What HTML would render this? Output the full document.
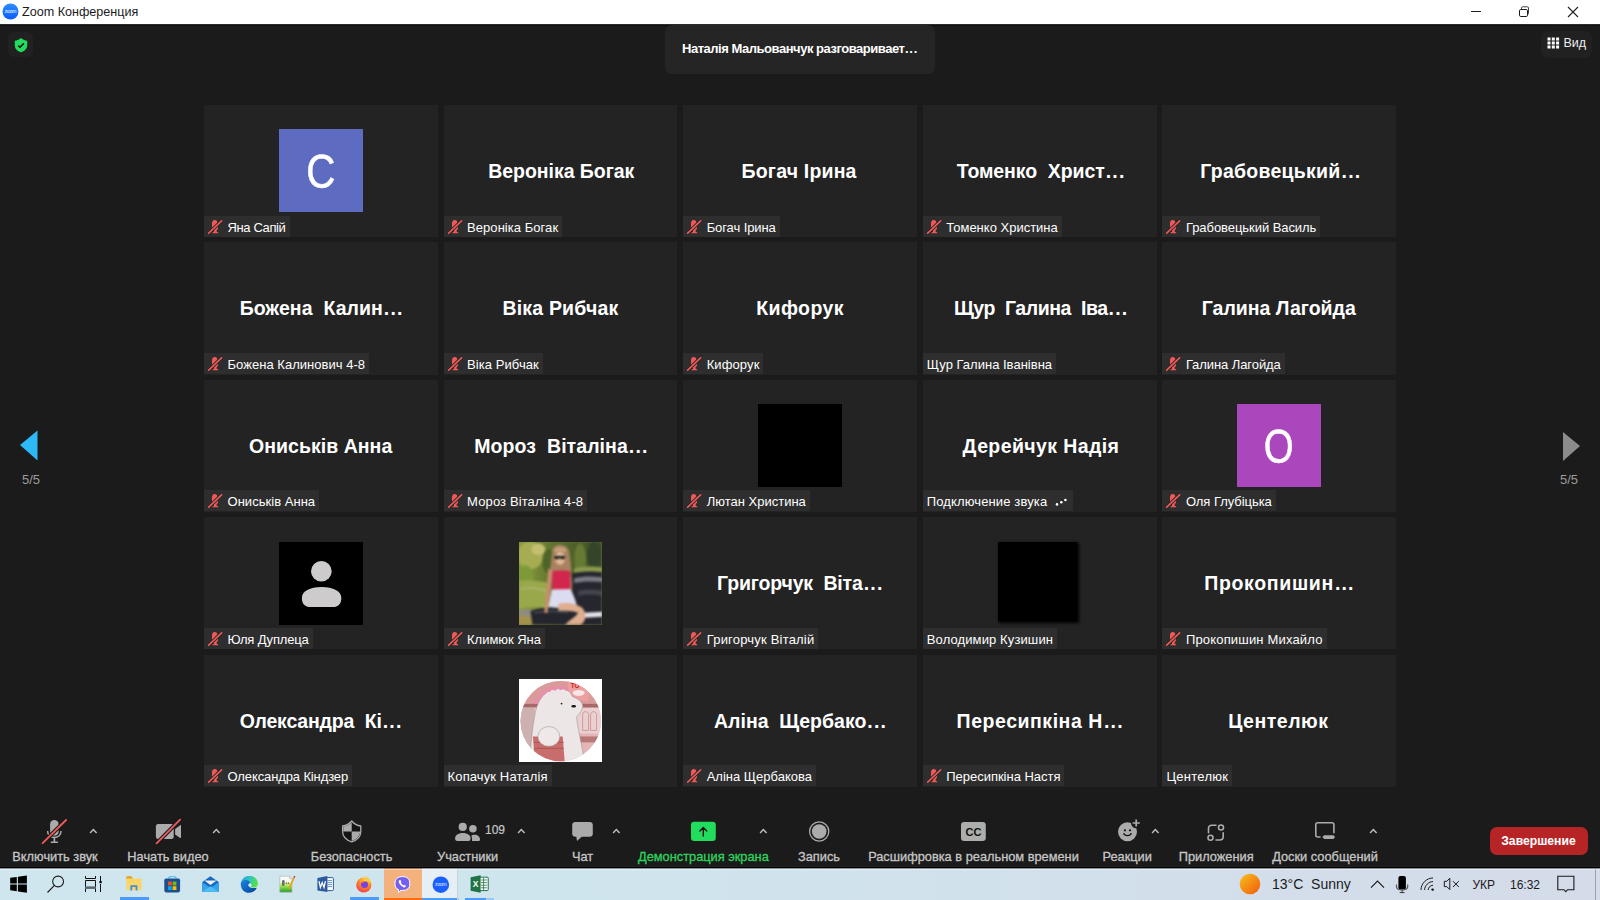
<!DOCTYPE html>
<html><head><meta charset="utf-8">
<style>
*{margin:0;padding:0;box-sizing:border-box}
html,body{width:1600px;height:900px;overflow:hidden;background:#1b1b1b;font-family:"Liberation Sans",sans-serif}
.abs{position:absolute}
#title{position:absolute;left:0;top:0;width:1600px;height:24px;background:#fff}
#title .t{position:absolute;left:22px;top:4.5px;font-size:12.6px;color:#1b1b1b;white-space:nowrap}
.tile{position:absolute;width:233.8px;height:132.2px;background:#232323;overflow:hidden}
.nm{position:absolute;left:0;right:0;top:1px;height:132px;display:flex;align-items:center;justify-content:center;color:#fff;font-weight:bold;font-size:19.5px;white-space:nowrap;padding-bottom:1px}
.av{position:absolute;left:75.1px;top:24.3px;width:83.5px;height:83.2px;overflow:hidden}
.av svg{display:block}
.av span{position:absolute;left:0;right:0;top:18.2px;text-align:center;color:#fff;font-size:48px;line-height:50px;-webkit-text-stroke:0.6px #fff}
.av.blur{background:#000;width:79px;height:79px;top:24.6px;box-shadow:1.5px 1.5px 3px 0.5px #000}
.lb{position:absolute;left:0;bottom:0.5px;height:21px;background:#2e2e2e;padding:0 4px 0 23.5px;color:#fff;font-size:13px;line-height:21px;white-space:nowrap}
.lt{position:relative;top:1px}
.lb.nomic{padding-left:4px}
.mic{position:absolute;left:0;top:0}
.dd{letter-spacing:1.2px;margin-left:1px}
#tb{position:absolute;left:0;top:800px;width:1600px;height:68px;background:#1b1b1b}
.tl{position:absolute;top:849px;color:#c6c6c6;font-size:12.8px;line-height:15px;white-space:nowrap;-webkit-text-stroke:0.3px currentColor}
.chev{position:absolute;top:828px;width:10px;height:7px}
#task{position:absolute;left:0;top:868px;width:1600px;height:32px;background:linear-gradient(to right,#d0e6ef 0%,#cfe5ee 36%,#d2e0eb 68%,#d4dbe9 97%)}
</style></head><body>
<div id="title">
 <svg class="abs" style="left:2px;top:3px" width="17" height="17" viewBox="0 0 17 17"><defs><linearGradient id="zg" x1="0" y1="0" x2="0" y2="1"><stop offset="0" stop-color="#2d8cff"/><stop offset="1" stop-color="#0b5cff"/></linearGradient></defs><circle cx="8.5" cy="8.5" r="8" fill="url(#zg)"/><text x="8.5" y="10.2" text-anchor="middle" font-size="5" letter-spacing="-0.2" fill="#fff" font-family="Liberation Sans">zoom</text></svg>
 <div class="t">Zoom Конференция</div>
 <div class="abs" style="left:1471px;top:11px;width:10px;height:1px;background:#222"></div>
 <svg class="abs" style="left:1518px;top:6px" width="12" height="12" viewBox="0 0 12 12"><rect x="1.5" y="3.5" width="8" height="7" rx="1.3" fill="none" stroke="#1a1a1a" stroke-width="1"/><path d="M3.5 3.2 V2 Q3.5 0.8 4.7 0.8 H9.3 Q10.5 0.8 10.5 2 V7.3 Q10.5 8.5 9.6 8.5" fill="none" stroke="#444" stroke-width="1"/></svg>
 <svg class="abs" style="left:1567px;top:6px" width="12" height="12" viewBox="0 0 12 12"><path d="M1 1 L11 11 M11 1 L1 11" stroke="#222" stroke-width="1.1"/></svg>
</div>
<div class="abs" style="left:0;top:24px;width:1600px;height:1px;background:#2c2c2c"></div><div class="abs" style="left:0;top:25px;width:1600px;height:1px;background:#111"></div>

<!-- security shield -->
<div class="abs" style="left:8px;top:32px;width:25px;height:25px;border-radius:6px;background:#212121"></div>
<svg class="abs" style="left:13px;top:37px" width="16" height="16" viewBox="0 0 16 16"><path d="M8 0.9 C6.6 2.4 4.2 3.4 1.8 3.7 V8.2 C1.8 11.6 4.4 14.2 8 15.3 C11.6 14.2 14.2 11.6 14.2 8.2 V3.7 C11.8 3.4 9.4 2.4 8 0.9 Z" fill="#22dc5e"/><path d="M5.2 8.6 L7 10.2 L10.8 6.4" fill="none" stroke="#111" stroke-width="1.5"/></svg>

<!-- speaker -->
<div class="abs" style="left:665px;top:25px;width:270px;height:49px;border-radius:7px;background:#252525"></div>
<div class="abs" style="left:682px;top:40.5px;color:#fff;font-weight:bold;font-size:13px;letter-spacing:-0.47px;white-space:nowrap">Наталія Мальованчук разговаривает<span style="letter-spacing:0.7px;margin-left:0.6px">...</span></div>

<!-- view -->
<div class="abs" style="left:1541px;top:31px;width:51px;height:27px;border-radius:7px;background:#212121"></div>
<svg class="abs" style="left:1547px;top:37px" width="13" height="12" viewBox="0 0 13 12"><g fill="#fff"><rect x="0.5" y="0.5" width="3" height="3"/><rect x="4.8" y="0.5" width="3" height="3"/><rect x="9.1" y="0.5" width="3" height="3"/><rect x="0.5" y="4.5" width="3" height="3"/><rect x="4.8" y="4.5" width="3" height="3"/><rect x="9.1" y="4.5" width="3" height="3"/><rect x="0.5" y="8.5" width="3" height="3"/><rect x="4.8" y="8.5" width="3" height="3"/><rect x="9.1" y="8.5" width="3" height="3"/></g></svg>
<div class="abs" style="left:1563.5px;top:35.5px;color:#eee;font-size:12.5px;white-space:nowrap">Вид</div>

<!-- arrows -->
<svg class="abs" style="left:18px;top:428px" width="22" height="35" viewBox="0 0 22 35"><path d="M2 17 L19.5 2.5 V32.5 Z" fill="#2eb8f6"/></svg>
<div class="abs" style="left:22px;top:471.8px;color:#9c9c9c;font-size:13px">5/5</div>
<svg class="abs" style="left:1560px;top:429px" width="22" height="35" viewBox="0 0 22 35"><path d="M3 3 L20 17 L3 32 Z" fill="#8b8b8b"/></svg>
<div class="abs" style="left:1560px;top:471.8px;color:#9c9c9c;font-size:13px">5/5</div>

<div class="tile" style="left:204px;top:104.9px"><div class="av" style="background:#5d6bc0"><span style="transform:scaleX(0.84)">C</span></div><div class="lb"><svg class="mic" width="24" height="21" viewBox="0 0 24 21"><path d="M10.7 4 C9 4 8 5.3 8 7.3 L8 11 C8 12.4 8.6 13.6 10 14.1 L10 16 L8.5 16.3 L8.5 17.3 L14.2 17.3 L14.2 16.3 L12.7 16 L12.7 14.1 C14 13.6 14 12.4 14 11 L13.5 7 C13.4 5.2 12.4 4 10.7 4 Z" fill="#ef5a59"/><path d="M4.7 17.2 L17.6 4.8" stroke="#262626" stroke-width="3.4"/><path d="M4.7 17.2 L17.6 4.8" stroke="#ef5a59" stroke-width="1.6" stroke-linecap="round"/></svg><span class="lt" style="letter-spacing:-0.375px">Яна Сапій</span></div></div>
<div class="tile" style="left:443.6px;top:104.9px"><div class="nm" style="letter-spacing:-0.035px;transform:translateX(0.75px)">Вероніка Богак</div><div class="lb"><svg class="mic" width="24" height="21" viewBox="0 0 24 21"><path d="M10.7 4 C9 4 8 5.3 8 7.3 L8 11 C8 12.4 8.6 13.6 10 14.1 L10 16 L8.5 16.3 L8.5 17.3 L14.2 17.3 L14.2 16.3 L12.7 16 L12.7 14.1 C14 13.6 14 12.4 14 11 L13.5 7 C13.4 5.2 12.4 4 10.7 4 Z" fill="#ef5a59"/><path d="M4.7 17.2 L17.6 4.8" stroke="#262626" stroke-width="3.4"/><path d="M4.7 17.2 L17.6 4.8" stroke="#ef5a59" stroke-width="1.6" stroke-linecap="round"/></svg><span class="lt" style="letter-spacing:0.046px">Вероніка Богак</span></div></div>
<div class="tile" style="left:683.2px;top:104.9px"><div class="nm" style="letter-spacing:0.183px;transform:translateX(-1.00px)">Богач Ірина</div><div class="lb"><svg class="mic" width="24" height="21" viewBox="0 0 24 21"><path d="M10.7 4 C9 4 8 5.3 8 7.3 L8 11 C8 12.4 8.6 13.6 10 14.1 L10 16 L8.5 16.3 L8.5 17.3 L14.2 17.3 L14.2 16.3 L12.7 16 L12.7 14.1 C14 13.6 14 12.4 14 11 L13.5 7 C13.4 5.2 12.4 4 10.7 4 Z" fill="#ef5a59"/><path d="M4.7 17.2 L17.6 4.8" stroke="#262626" stroke-width="3.4"/><path d="M4.7 17.2 L17.6 4.8" stroke="#ef5a59" stroke-width="1.6" stroke-linecap="round"/></svg><span class="lt" style="letter-spacing:-0.100px">Богач Ірина</span></div></div>
<div class="tile" style="left:922.8px;top:104.9px"><div class="nm" style="letter-spacing:-0.071px;transform:translateX(1.50px)">Томенко&nbsp; Христ<span class="dd">...</span></div><div class="lb"><svg class="mic" width="24" height="21" viewBox="0 0 24 21"><path d="M10.7 4 C9 4 8 5.3 8 7.3 L8 11 C8 12.4 8.6 13.6 10 14.1 L10 16 L8.5 16.3 L8.5 17.3 L14.2 17.3 L14.2 16.3 L12.7 16 L12.7 14.1 C14 13.6 14 12.4 14 11 L13.5 7 C13.4 5.2 12.4 4 10.7 4 Z" fill="#ef5a59"/><path d="M4.7 17.2 L17.6 4.8" stroke="#262626" stroke-width="3.4"/><path d="M4.7 17.2 L17.6 4.8" stroke="#ef5a59" stroke-width="1.6" stroke-linecap="round"/></svg><span class="lt">Томенко Христина</span></div></div>
<div class="tile" style="left:1162.4px;top:104.9px"><div class="nm" style="letter-spacing:0.249px;transform:translateX(1.50px)">Грабовецький<span class="dd">...</span></div><div class="lb"><svg class="mic" width="24" height="21" viewBox="0 0 24 21"><path d="M10.7 4 C9 4 8 5.3 8 7.3 L8 11 C8 12.4 8.6 13.6 10 14.1 L10 16 L8.5 16.3 L8.5 17.3 L14.2 17.3 L14.2 16.3 L12.7 16 L12.7 14.1 C14 13.6 14 12.4 14 11 L13.5 7 C13.4 5.2 12.4 4 10.7 4 Z" fill="#ef5a59"/><path d="M4.7 17.2 L17.6 4.8" stroke="#262626" stroke-width="3.4"/><path d="M4.7 17.2 L17.6 4.8" stroke="#ef5a59" stroke-width="1.6" stroke-linecap="round"/></svg><span class="lt" style="letter-spacing:-0.056px">Грабовецький Василь</span></div></div>
<div class="tile" style="left:204px;top:242.35px"><div class="nm" style="letter-spacing:0.038px;transform:translateX(0.75px)">Божена&nbsp; Калин<span class="dd">...</span></div><div class="lb"><svg class="mic" width="24" height="21" viewBox="0 0 24 21"><path d="M10.7 4 C9 4 8 5.3 8 7.3 L8 11 C8 12.4 8.6 13.6 10 14.1 L10 16 L8.5 16.3 L8.5 17.3 L14.2 17.3 L14.2 16.3 L12.7 16 L12.7 14.1 C14 13.6 14 12.4 14 11 L13.5 7 C13.4 5.2 12.4 4 10.7 4 Z" fill="#ef5a59"/><path d="M4.7 17.2 L17.6 4.8" stroke="#262626" stroke-width="3.4"/><path d="M4.7 17.2 L17.6 4.8" stroke="#ef5a59" stroke-width="1.6" stroke-linecap="round"/></svg><span class="lt" style="letter-spacing:0.031px">Божена Калинович 4-8</span></div></div>
<div class="tile" style="left:443.6px;top:242.35px"><div class="nm" style="letter-spacing:0.182px;transform:translateX(0.00px)">Віка Рибчак</div><div class="lb"><svg class="mic" width="24" height="21" viewBox="0 0 24 21"><path d="M10.7 4 C9 4 8 5.3 8 7.3 L8 11 C8 12.4 8.6 13.6 10 14.1 L10 16 L8.5 16.3 L8.5 17.3 L14.2 17.3 L14.2 16.3 L12.7 16 L12.7 14.1 C14 13.6 14 12.4 14 11 L13.5 7 C13.4 5.2 12.4 4 10.7 4 Z" fill="#ef5a59"/><path d="M4.7 17.2 L17.6 4.8" stroke="#262626" stroke-width="3.4"/><path d="M4.7 17.2 L17.6 4.8" stroke="#ef5a59" stroke-width="1.6" stroke-linecap="round"/></svg><span class="lt" style="letter-spacing:0.060px">Віка Рибчак</span></div></div>
<div class="tile" style="left:683.2px;top:242.35px"><div class="nm" style="letter-spacing:0.429px;transform:translateX(0.00px)">Кифорук</div><div class="lb"><svg class="mic" width="24" height="21" viewBox="0 0 24 21"><path d="M10.7 4 C9 4 8 5.3 8 7.3 L8 11 C8 12.4 8.6 13.6 10 14.1 L10 16 L8.5 16.3 L8.5 17.3 L14.2 17.3 L14.2 16.3 L12.7 16 L12.7 14.1 C14 13.6 14 12.4 14 11 L13.5 7 C13.4 5.2 12.4 4 10.7 4 Z" fill="#ef5a59"/><path d="M4.7 17.2 L17.6 4.8" stroke="#262626" stroke-width="3.4"/><path d="M4.7 17.2 L17.6 4.8" stroke="#ef5a59" stroke-width="1.6" stroke-linecap="round"/></svg><span class="lt" style="letter-spacing:0.100px">Кифорук</span></div></div>
<div class="tile" style="left:922.8px;top:242.35px"><div class="nm" style="letter-spacing:-0.436px;transform:translateX(1.50px)">Щур&nbsp; Галина&nbsp; Іва<span class="dd">...</span></div><div class="lb nomic"><span class="lt" style="letter-spacing:0.011px">Щур Галина Іванівна</span></div></div>
<div class="tile" style="left:1162.4px;top:242.35px"><div class="nm" style="letter-spacing:-0.001px;transform:translateX(-0.50px)">Галина Лагойда</div><div class="lb"><svg class="mic" width="24" height="21" viewBox="0 0 24 21"><path d="M10.7 4 C9 4 8 5.3 8 7.3 L8 11 C8 12.4 8.6 13.6 10 14.1 L10 16 L8.5 16.3 L8.5 17.3 L14.2 17.3 L14.2 16.3 L12.7 16 L12.7 14.1 C14 13.6 14 12.4 14 11 L13.5 7 C13.4 5.2 12.4 4 10.7 4 Z" fill="#ef5a59"/><path d="M4.7 17.2 L17.6 4.8" stroke="#262626" stroke-width="3.4"/><path d="M4.7 17.2 L17.6 4.8" stroke="#ef5a59" stroke-width="1.6" stroke-linecap="round"/></svg><span class="lt" style="letter-spacing:-0.077px">Галина Лагойда</span></div></div>
<div class="tile" style="left:204px;top:379.8px"><div class="nm" style="letter-spacing:0.039px;transform:translateX(-0.25px)">Ониськів Анна</div><div class="lb"><svg class="mic" width="24" height="21" viewBox="0 0 24 21"><path d="M10.7 4 C9 4 8 5.3 8 7.3 L8 11 C8 12.4 8.6 13.6 10 14.1 L10 16 L8.5 16.3 L8.5 17.3 L14.2 17.3 L14.2 16.3 L12.7 16 L12.7 14.1 C14 13.6 14 12.4 14 11 L13.5 7 C13.4 5.2 12.4 4 10.7 4 Z" fill="#ef5a59"/><path d="M4.7 17.2 L17.6 4.8" stroke="#262626" stroke-width="3.4"/><path d="M4.7 17.2 L17.6 4.8" stroke="#ef5a59" stroke-width="1.6" stroke-linecap="round"/></svg><span class="lt" style="letter-spacing:0.033px">Ониськів Анна</span></div></div>
<div class="tile" style="left:443.6px;top:379.8px"><div class="nm" style="letter-spacing:0.066px;transform:translateX(1.00px)">Мороз&nbsp; Віталіна<span class="dd">...</span></div><div class="lb"><svg class="mic" width="24" height="21" viewBox="0 0 24 21"><path d="M10.7 4 C9 4 8 5.3 8 7.3 L8 11 C8 12.4 8.6 13.6 10 14.1 L10 16 L8.5 16.3 L8.5 17.3 L14.2 17.3 L14.2 16.3 L12.7 16 L12.7 14.1 C14 13.6 14 12.4 14 11 L13.5 7 C13.4 5.2 12.4 4 10.7 4 Z" fill="#ef5a59"/><path d="M4.7 17.2 L17.6 4.8" stroke="#262626" stroke-width="3.4"/><path d="M4.7 17.2 L17.6 4.8" stroke="#ef5a59" stroke-width="1.6" stroke-linecap="round"/></svg><span class="lt" style="letter-spacing:0.118px">Мороз Віталіна 4-8</span></div></div>
<div class="tile" style="left:683.2px;top:379.8px"><div class="av" style="background:#000"></div><div class="lb"><svg class="mic" width="24" height="21" viewBox="0 0 24 21"><path d="M10.7 4 C9 4 8 5.3 8 7.3 L8 11 C8 12.4 8.6 13.6 10 14.1 L10 16 L8.5 16.3 L8.5 17.3 L14.2 17.3 L14.2 16.3 L12.7 16 L12.7 14.1 C14 13.6 14 12.4 14 11 L13.5 7 C13.4 5.2 12.4 4 10.7 4 Z" fill="#ef5a59"/><path d="M4.7 17.2 L17.6 4.8" stroke="#262626" stroke-width="3.4"/><path d="M4.7 17.2 L17.6 4.8" stroke="#ef5a59" stroke-width="1.6" stroke-linecap="round"/></svg><span class="lt">Лютан Христина</span></div></div>
<div class="tile" style="left:922.8px;top:379.8px"><div class="nm" style="letter-spacing:0.393px;transform:translateX(1.25px)">Дерейчук Надія</div><div class="lb nomic"><span class="lt" style="letter-spacing:0.125px">Подключение звука</span><svg style="position:relative;top:3px;margin-left:5px" width="17" height="12" viewBox="0 0 17 12"><circle cx="5" cy="8.4" r="1.3" fill="#fff"/><circle cx="9.3" cy="6.2" r="1.3" fill="#fff"/><circle cx="13.4" cy="4" r="1.3" fill="#fff"/></svg></div></div>
<div class="tile" style="left:1162.4px;top:379.8px"><div class="av" style="background:#ab47bc"><span style="transform:scaleX(0.8)">O</span></div><div class="lb"><svg class="mic" width="24" height="21" viewBox="0 0 24 21"><path d="M10.7 4 C9 4 8 5.3 8 7.3 L8 11 C8 12.4 8.6 13.6 10 14.1 L10 16 L8.5 16.3 L8.5 17.3 L14.2 17.3 L14.2 16.3 L12.7 16 L12.7 14.1 C14 13.6 14 12.4 14 11 L13.5 7 C13.4 5.2 12.4 4 10.7 4 Z" fill="#ef5a59"/><path d="M4.7 17.2 L17.6 4.8" stroke="#262626" stroke-width="3.4"/><path d="M4.7 17.2 L17.6 4.8" stroke="#ef5a59" stroke-width="1.6" stroke-linecap="round"/></svg><span class="lt" style="letter-spacing:-0.050px">Оля Глубіцька</span></div></div>
<div class="tile" style="left:204px;top:517.25px"><div class="av" style="background:#000"><svg width="100%" height="100%" viewBox="0 0 84 84" preserveAspectRatio="none"><circle cx="42.6" cy="29.6" r="10.4" fill="#cdcbcc"/><path d="M23 56.5 C23 49.5 31 45.4 42.8 45.4 C54.6 45.4 62.7 49.5 62.7 56.5 C62.7 62.5 59.5 65.7 54 65.7 H31.7 C26.2 65.7 23 62.5 23 56.5 Z" fill="#cdcbcc"/></svg></div><div class="lb"><svg class="mic" width="24" height="21" viewBox="0 0 24 21"><path d="M10.7 4 C9 4 8 5.3 8 7.3 L8 11 C8 12.4 8.6 13.6 10 14.1 L10 16 L8.5 16.3 L8.5 17.3 L14.2 17.3 L14.2 16.3 L12.7 16 L12.7 14.1 C14 13.6 14 12.4 14 11 L13.5 7 C13.4 5.2 12.4 4 10.7 4 Z" fill="#ef5a59"/><path d="M4.7 17.2 L17.6 4.8" stroke="#262626" stroke-width="3.4"/><path d="M4.7 17.2 L17.6 4.8" stroke="#ef5a59" stroke-width="1.6" stroke-linecap="round"/></svg><span class="lt" style="letter-spacing:-0.160px">Юля Дуплеца</span></div></div>
<div class="tile" style="left:443.6px;top:517.25px"><div class="av" style="background:#6f7a3a"><svg style="position:absolute;left:-1.5px;top:-1.5px;width:86.5px;height:86.2px;filter:blur(0.8px)" viewBox="-1.5 -1.5 87 87" preserveAspectRatio="none">
<defs><filter id="pb" x="-10%" y="-10%" width="120%" height="120%"><feGaussianBlur stdDeviation="0.75"/></filter>
<linearGradient id="pg" x1="0" y1="0" x2="1" y2="0"><stop offset="0" stop-color="#8fa040"/><stop offset="0.45" stop-color="#5a6e2c"/><stop offset="1" stop-color="#3c4c26"/></linearGradient></defs>
<g>
<rect width="84" height="84" fill="url(#pg)"/>
<ellipse cx="12" cy="14" rx="13" ry="14" fill="#a6ac52"/>
<ellipse cx="20" cy="8" rx="7" ry="6" fill="#c2c070"/>
<ellipse cx="6" cy="34" rx="9" ry="10" fill="#7e9a38"/>
<ellipse cx="30" cy="20" rx="6" ry="12" fill="#4e6428"/>
<ellipse cx="62" cy="18" rx="6" ry="16" fill="#667a34"/>
<ellipse cx="76" cy="14" rx="7" ry="14" fill="#33442a"/>
<path d="M56 27 C64 25 76 25 84 26 V33 C76 32 64 32 56 33 Z" fill="#8a9a4c"/>
<path d="M0 40 C10 38 22 40 30 42 V68 C20 66 8 66 0 68 Z" fill="#9aa84c"/>
<path d="M2 48 C10 46 20 47 28 50" stroke="#b4b878" stroke-width="1.5" fill="none"/>
<path d="M0 70 C8 68 18 68 28 70 V84 H0 Z" fill="#a4924c"/>
<ellipse cx="8" cy="72" rx="8" ry="3.5" fill="#8c8c86"/>
<path d="M54 32 C64 30 76 30 84 31 V84 H54 Z" fill="#26262e"/>
<path d="M56 37 C64 35 74 35 84 36 V41 C74 40 64 40 56 42 Z" fill="#7a7a86"/>
<path d="M60 50 C68 48 76 48 84 50 V55 C76 53 68 53 60 55 Z" fill="#44444c"/>
<path d="M12 70 C24 66 40 66 56 68 L84 70 V84 H14 Z" fill="#25252d"/>
<path d="M16 72 C26 70 40 70 50 72" stroke="#55555e" stroke-width="1.2" fill="none"/>
<path d="M66 72 L84 71 V76 L66 77 Z" fill="#e2e2ea"/>
<path d="M34 9 C35 4 40 2.5 44 3.5 C49 4.5 51 8 51.5 13 L53 27 C54 31 52 33 49 33 L36 33 C33 33 31 31 32 27 Z" fill="#a88260"/>
<ellipse cx="41.8" cy="17" rx="5" ry="6.6" fill="#e2b898"/>
<path d="M36 8 C39 5 45 5 48 8 L47 11 C44 9 40 9 37 11 Z" fill="#c8a47c"/>
<path d="M36 14.6 H46.8 V17 C45 18.4 43 18.2 41.6 16.4 C40 18.2 37.6 18.4 36 17 Z" fill="#1c1c1c"/>
<path d="M30 27 C29 40 27 58 26 72 L29 72.5 C31 60 33 44 34.5 30 Z" fill="#c68e6c"/>
<path d="M51 28 C53 34 54 42 53.5 48 L50.5 48 Z" fill="#c68e6c"/>
<path d="M34 30 C38 29 47 29 52 30 L52.5 49 L33.8 49.5 Z" fill="#d2264c"/>
<path d="M33.5 48.5 L52.5 48 C55 54 57.5 59 58.5 64 C50 67 40 68 30 66 Z" fill="#dcdcf0"/>
<path d="M40 63 C48 61 58 62 64 67 C67 70 68 74 67 78 C66 81 64 84 62 84 L47 84 C50 80 58 76 60 72 C54 70 46 70 40 70 Z" fill="#deae8e"/>
</g></svg></div><div class="lb"><svg class="mic" width="24" height="21" viewBox="0 0 24 21"><path d="M10.7 4 C9 4 8 5.3 8 7.3 L8 11 C8 12.4 8.6 13.6 10 14.1 L10 16 L8.5 16.3 L8.5 17.3 L14.2 17.3 L14.2 16.3 L12.7 16 L12.7 14.1 C14 13.6 14 12.4 14 11 L13.5 7 C13.4 5.2 12.4 4 10.7 4 Z" fill="#ef5a59"/><path d="M4.7 17.2 L17.6 4.8" stroke="#262626" stroke-width="3.4"/><path d="M4.7 17.2 L17.6 4.8" stroke="#ef5a59" stroke-width="1.6" stroke-linecap="round"/></svg><span class="lt" style="letter-spacing:-0.044px">Климюк Яна</span></div></div>
<div class="tile" style="left:683.2px;top:517.25px"><div class="nm" style="letter-spacing:-0.167px;transform:translateX(0.25px)">Григорчук&nbsp; Віта<span class="dd">...</span></div><div class="lb"><svg class="mic" width="24" height="21" viewBox="0 0 24 21"><path d="M10.7 4 C9 4 8 5.3 8 7.3 L8 11 C8 12.4 8.6 13.6 10 14.1 L10 16 L8.5 16.3 L8.5 17.3 L14.2 17.3 L14.2 16.3 L12.7 16 L12.7 14.1 C14 13.6 14 12.4 14 11 L13.5 7 C13.4 5.2 12.4 4 10.7 4 Z" fill="#ef5a59"/><path d="M4.7 17.2 L17.6 4.8" stroke="#262626" stroke-width="3.4"/><path d="M4.7 17.2 L17.6 4.8" stroke="#ef5a59" stroke-width="1.6" stroke-linecap="round"/></svg><span class="lt" style="letter-spacing:0.200px">Григорчук Віталій</span></div></div>
<div class="tile" style="left:922.8px;top:517.25px"><div class="av blur"></div><div class="lb nomic"><span class="lt" style="letter-spacing:0.113px">Володимир Кузишин</span></div></div>
<div class="tile" style="left:1162.4px;top:517.25px"><div class="nm" style="letter-spacing:0.650px;transform:translateX(0.25px)">Прокопишин<span class="dd">...</span></div><div class="lb"><svg class="mic" width="24" height="21" viewBox="0 0 24 21"><path d="M10.7 4 C9 4 8 5.3 8 7.3 L8 11 C8 12.4 8.6 13.6 10 14.1 L10 16 L8.5 16.3 L8.5 17.3 L14.2 17.3 L14.2 16.3 L12.7 16 L12.7 14.1 C14 13.6 14 12.4 14 11 L13.5 7 C13.4 5.2 12.4 4 10.7 4 Z" fill="#ef5a59"/><path d="M4.7 17.2 L17.6 4.8" stroke="#262626" stroke-width="3.4"/><path d="M4.7 17.2 L17.6 4.8" stroke="#ef5a59" stroke-width="1.6" stroke-linecap="round"/></svg><span class="lt" style="letter-spacing:0.176px">Прокопишин Михайло</span></div></div>
<div class="tile" style="left:204px;top:654.7px"><div class="nm" style="letter-spacing:-0.177px;transform:translateX(0.25px)">Олександра&nbsp; Кі<span class="dd">...</span></div><div class="lb"><svg class="mic" width="24" height="21" viewBox="0 0 24 21"><path d="M10.7 4 C9 4 8 5.3 8 7.3 L8 11 C8 12.4 8.6 13.6 10 14.1 L10 16 L8.5 16.3 L8.5 17.3 L14.2 17.3 L14.2 16.3 L12.7 16 L12.7 14.1 C14 13.6 14 12.4 14 11 L13.5 7 C13.4 5.2 12.4 4 10.7 4 Z" fill="#ef5a59"/><path d="M4.7 17.2 L17.6 4.8" stroke="#262626" stroke-width="3.4"/><path d="M4.7 17.2 L17.6 4.8" stroke="#ef5a59" stroke-width="1.6" stroke-linecap="round"/></svg><span class="lt" style="letter-spacing:-0.118px">Олександра Кіндзер</span></div></div>
<div class="tile" style="left:443.6px;top:654.7px"><div class="av" style="background:#fff"><svg style="position:absolute;left:0;top:0;width:100%;height:100%" viewBox="0 0 84 84" preserveAspectRatio="none">
<defs><clipPath id="bc"><circle cx="42" cy="42.5" r="40.5"/></clipPath><filter id="bb"><feGaussianBlur stdDeviation="0.5"/></filter></defs>
<g clip-path="url(#bc)"><g>
<rect width="84" height="84" fill="#e4b6b6"/>
<rect x="0" y="0" width="84" height="25" fill="#d99a9a"/>
<rect x="0" y="25" width="84" height="4" fill="#a86868"/>
<rect x="0" y="29" width="84" height="26" fill="#ead0d0"/>
<rect x="0" y="29" width="16" height="55" fill="#cdb0b0"/>
<rect x="49" y="1" width="21" height="21" fill="#eea0a0"/>
<ellipse cx="60" cy="14" rx="6" ry="3" fill="#f6e6e6"/>
<path d="M64 36 C64 32 70 32 70 36 V52 H64 Z M72 36 C72 32 78 32 78 36 V52 H72 Z" fill="none" stroke="#c99090" stroke-width="0.8"/>
<rect x="60" y="58" width="24" height="6" fill="#b77878"/>
<path d="M11 84 C12 66 14 40 18 28 C22 16 30 9.5 40 9.5 C48 9.5 52 13 54 18 C60 20 65 24 64 28.5 C63 33 60 36 58 38 C58 44 62 60 66 84 Z" fill="#ece6e6" stroke="#9a8a8a" stroke-width="0.5"/>
<path d="M14 58 L44 58 L46 84 L16 84 Z" fill="#c86c6c"/>
<path d="M15 64 H45 M15 70 H45" stroke="#a85050" stroke-width="0.8"/>
<ellipse cx="30" cy="58" rx="11" ry="10" fill="#eee8e8" stroke="#9a8a8a" stroke-width="0.5"/>
<circle cx="42.8" cy="24.8" r="0.9" fill="#222"/>
<ellipse cx="55" cy="27.5" rx="2.4" ry="1.3" fill="#111"/>
<g fill="#f08ab0"><circle cx="17" cy="23" r="2.2"/><circle cx="21" cy="18" r="2.2"/><circle cx="25" cy="14" r="2.2"/><circle cx="30" cy="11" r="2.2"/><circle cx="36" cy="9.5" r="2.2"/><circle cx="42" cy="9" r="2.2"/><circle cx="48" cy="10" r="2"/></g>
<text x="52" y="9" font-family="Liberation Sans" font-weight="bold" font-size="6.5" fill="#c41c1c">TO</text>
</g></g></svg></div><div class="lb nomic"><span class="lt" style="letter-spacing:0.115px">Копачук Наталія</span></div></div>
<div class="tile" style="left:683.2px;top:654.7px"><div class="nm" style="letter-spacing:0.001px;transform:translateX(0.50px)">Аліна&nbsp; Щербако<span class="dd">...</span></div><div class="lb"><svg class="mic" width="24" height="21" viewBox="0 0 24 21"><path d="M10.7 4 C9 4 8 5.3 8 7.3 L8 11 C8 12.4 8.6 13.6 10 14.1 L10 16 L8.5 16.3 L8.5 17.3 L14.2 17.3 L14.2 16.3 L12.7 16 L12.7 14.1 C14 13.6 14 12.4 14 11 L13.5 7 C13.4 5.2 12.4 4 10.7 4 Z" fill="#ef5a59"/><path d="M4.7 17.2 L17.6 4.8" stroke="#262626" stroke-width="3.4"/><path d="M4.7 17.2 L17.6 4.8" stroke="#ef5a59" stroke-width="1.6" stroke-linecap="round"/></svg><span class="lt">Аліна Щербакова</span></div></div>
<div class="tile" style="left:922.8px;top:654.7px"><div class="nm" style="letter-spacing:0.540px;transform:translateX(0.50px)">Пересипкіна Н<span class="dd">...</span></div><div class="lb"><svg class="mic" width="24" height="21" viewBox="0 0 24 21"><path d="M10.7 4 C9 4 8 5.3 8 7.3 L8 11 C8 12.4 8.6 13.6 10 14.1 L10 16 L8.5 16.3 L8.5 17.3 L14.2 17.3 L14.2 16.3 L12.7 16 L12.7 14.1 C14 13.6 14 12.4 14 11 L13.5 7 C13.4 5.2 12.4 4 10.7 4 Z" fill="#ef5a59"/><path d="M4.7 17.2 L17.6 4.8" stroke="#262626" stroke-width="3.4"/><path d="M4.7 17.2 L17.6 4.8" stroke="#ef5a59" stroke-width="1.6" stroke-linecap="round"/></svg><span class="lt" style="letter-spacing:-0.025px">Пересипкіна Настя</span></div></div>
<div class="tile" style="left:1162.4px;top:654.7px"><div class="nm" style="letter-spacing:0.500px;transform:translateX(-1.00px)">Центелюк</div><div class="lb nomic"><span class="lt" style="letter-spacing:0.285px">Центелюк</span></div></div>

<!-- toolbar -->
<div id="tbx"></div>
<svg class="abs" style="left:38px;top:814px" width="32" height="32" viewBox="0 0 32 32"><rect x="12.1" y="5.9" width="8.5" height="15.8" rx="4.25" fill="#ababab"/><path d="M9.6 17 C9.6 21 12.5 23.4 16.3 23.4 C20.1 23.4 23 21 23 17" fill="none" stroke="#ababab" stroke-width="1.5"/><rect x="15.5" y="23" width="1.7" height="5" fill="#ababab"/><rect x="12.5" y="27.4" width="7.6" height="1.6" rx="0.8" fill="#ababab"/><path d="M4.6 29.2 L28.1 6" stroke="#1b1b1b" stroke-width="4"/><path d="M4.6 29.2 L28.1 6" stroke="#f05b5b" stroke-width="1.8" stroke-linecap="round"/></svg>
<svg class="abs" style="left:89px;top:827px" width="10" height="9" viewBox="0 0 10 9"><path d="M1.1 5.9 L4.3 2.5 L7.6 6.1" fill="none" stroke="#bdbdbd" stroke-width="1.45"/></svg>
<div class="tl" style="left:-95px;width:300px;text-align:center;color:#c6c6c6">Включить звук</div>
<svg class="abs" style="left:152px;top:814px" width="32" height="32" viewBox="0 0 32 32"><rect x="3.9" y="10.1" width="17.8" height="14.8" rx="2.2" fill="#ababab"/><path d="M23.1 15 L28.2 11.2 C28.7 10.9 29 11.1 29 11.7 V23.4 C29 24 28.7 24.2 28.2 23.9 L23.1 20.4 Z" fill="#ababab"/><path d="M4.6 29.4 L28.1 5.6" stroke="#1b1b1b" stroke-width="4"/><path d="M4.6 29.4 L28.1 5.6" stroke="#f05b5b" stroke-width="1.8" stroke-linecap="round"/></svg>
<svg class="abs" style="left:211.6px;top:827px" width="10" height="9" viewBox="0 0 10 9"><path d="M1.1 5.9 L4.3 2.5 L7.6 6.1" fill="none" stroke="#bdbdbd" stroke-width="1.45"/></svg>
<div class="tl" style="left:18px;width:300px;text-align:center;color:#c6c6c6">Начать видео</div>
<svg class="abs" style="left:338px;top:816px" width="28" height="28" viewBox="0 0 28 28"><path d="M13.7 5 C11.8 7.3 8.5 9.5 4.6 10 V15.5 C4.6 20.5 8.5 24.2 13.7 25.8 C18.9 24.2 22.8 20.5 22.8 15.5 V10 C18.9 9.5 15.6 7.3 13.7 5 Z" fill="#141414" stroke="#ababab" stroke-width="1.3" stroke-linejoin="round"/><path d="M13.7 6.5 V15.5 H5.3 V10.6 C8.8 10 11.8 8.4 13.7 6.5 Z" fill="#ababab"/><path d="M13.7 15.5 H22.1 C21.9 20 18.6 23.3 13.7 25 Z" fill="#ababab"/></svg>
<div class="tl" style="left:201.60000000000002px;width:300px;text-align:center;color:#c6c6c6">Безопасность</div>
<svg class="abs" style="left:450px;top:816px" width="32" height="30" viewBox="0 0 32 30"><circle cx="12.75" cy="10.9" r="4.1" fill="#ababab"/><circle cx="22.9" cy="12.75" r="3.75" fill="#ababab"/><path d="M21.4 24.9 H28.6 C29.6 24.9 30 24.3 30 23.4 C30 20.6 27.6 18.7 24.6 18.7 C22.8 18.7 21.8 19.3 21.2 19.8 C21.9 21 22.2 22.3 22 24.9 Z" fill="#ababab"/><path d="M5.1 22.4 C5.1 19.2 8.2 16.9 12.85 16.9 C17.5 16.9 20.6 19.2 20.6 22.4 C20.6 24 19.9 24.9 18.4 24.9 H7.3 C5.8 24.9 5.1 24 5.1 22.4 Z" fill="#ababab"/></svg>
<div class="abs" style="left:485px;top:822.5px;color:#c6c6c6;font-size:12px;line-height:14px;-webkit-text-stroke:0.2px currentColor">109</div>
<svg class="abs" style="left:517px;top:827px" width="10" height="9" viewBox="0 0 10 9"><path d="M1.1 5.9 L4.3 2.5 L7.6 6.1" fill="none" stroke="#bdbdbd" stroke-width="1.45"/></svg>
<div class="tl" style="left:317.6px;width:300px;text-align:center;color:#c6c6c6">Участники</div>
<svg class="abs" style="left:566px;top:816px" width="34" height="30" viewBox="0 0 34 30"><path d="M9.2 6 H23.8 C25.5 6 26.8 7.3 26.8 9 V17.7 C26.8 19.4 25.5 20.7 23.8 20.7 H15.7 L11 25 L10.3 20.7 H9.2 C7.5 20.7 6.2 19.4 6.2 17.7 V9 C6.2 7.3 7.5 6 9.2 6 Z" fill="#ababab"/></svg>
<svg class="abs" style="left:611.5px;top:827px" width="10" height="9" viewBox="0 0 10 9"><path d="M1.1 5.9 L4.3 2.5 L7.6 6.1" fill="none" stroke="#bdbdbd" stroke-width="1.45"/></svg>
<div class="tl" style="left:432.5px;width:300px;text-align:center;color:#c6c6c6">Чат</div>
<svg class="abs" style="left:686px;top:816px" width="34" height="30" viewBox="0 0 34 30"><rect x="5" y="5.8" width="24.8" height="19.2" rx="3.2" fill="#22dc5e"/><path d="M17.3 20 V11.6 M13.9 14.9 L17.3 11.4 L20.7 14.9" fill="none" stroke="#111" stroke-width="1.4" stroke-linecap="round" stroke-linejoin="round"/></svg>
<svg class="abs" style="left:759px;top:827px" width="10" height="9" viewBox="0 0 10 9"><path d="M1.1 5.9 L4.3 2.5 L7.6 6.1" fill="none" stroke="#bdbdbd" stroke-width="1.45"/></svg>
<div class="tl" style="left:553.4px;width:300px;text-align:center;color:#2ed55f">Демонстрация экрана</div>
<svg class="abs" style="left:800px;top:816px" width="40" height="30" viewBox="0 0 40 30"><circle cx="19.2" cy="15.5" r="9.6" fill="none" stroke="#ababab" stroke-width="1.3"/><circle cx="19.2" cy="15.5" r="7.3" fill="#ababab"/></svg>
<div class="tl" style="left:669px;width:300px;text-align:center;color:#c6c6c6">Запись</div>
<svg class="abs" style="left:956px;top:816px" width="34" height="30" viewBox="0 0 34 30"><rect x="5" y="6" width="24.8" height="19" rx="3.2" fill="#adadad"/><text x="17.4" y="19.6" text-anchor="middle" font-family="Liberation Sans" font-weight="bold" font-size="11" fill="#111">CC</text></svg>
<div class="tl" style="left:823.5px;width:300px;text-align:center;color:#c6c6c6">Расшифровка в реальном времени</div>
<svg class="abs" style="left:1110px;top:816px" width="34" height="30" viewBox="0 0 34 30"><defs><mask id="rm"><rect width="34" height="30" fill="#fff"/><circle cx="26.2" cy="7" r="5.2" fill="#000"/></mask></defs><circle cx="17.5" cy="15.8" r="9.5" fill="#ababab" mask="url(#rm)"/><circle cx="14.9" cy="14.3" r="1.1" fill="#111"/><circle cx="20" cy="14.3" r="1.1" fill="#111"/><path d="M13.6 17.3 C14.8 20.3 20.2 20.3 21.4 17.3" fill="none" stroke="#111" stroke-width="1.3"/><path d="M26.2 3.4 V10.6 M22.6 7 H29.8" stroke="#ababab" stroke-width="1.7"/></svg>
<svg class="abs" style="left:1151px;top:827px" width="10" height="9" viewBox="0 0 10 9"><path d="M1.1 5.9 L4.3 2.5 L7.6 6.1" fill="none" stroke="#bdbdbd" stroke-width="1.45"/></svg>
<div class="tl" style="left:977.2px;width:300px;text-align:center;color:#c6c6c6">Реакции</div>
<svg class="abs" style="left:1200px;top:816px" width="34" height="30" viewBox="0 0 34 30"><path d="M8.5 16.7 V12.5 C8.5 10.5 10 9.3 12 9.3 H16" fill="none" stroke="#ababab" stroke-width="1.6" stroke-linecap="round"/><path d="M23.2 16.7 V20.8 C23.2 22.8 21.7 24 19.7 24 H16" fill="none" stroke="#ababab" stroke-width="1.6" stroke-linecap="round"/><circle cx="21" cy="11.5" r="2.5" fill="none" stroke="#ababab" stroke-width="1.6"/><circle cx="10.5" cy="21.8" r="2.5" fill="none" stroke="#ababab" stroke-width="1.6"/></svg>
<div class="tl" style="left:1066.2px;width:300px;text-align:center;color:#c6c6c6">Приложения</div>
<svg class="abs" style="left:1308px;top:816px" width="34" height="30" viewBox="0 0 34 30"><path d="M12 21 H9.8 C8.6 21 7.8 20.2 7.8 19 V8.8 C7.8 7.6 8.6 6.8 9.8 6.8 H23.9 C25.1 6.8 25.9 7.6 25.9 8.8 V16.7" fill="none" stroke="#ababab" stroke-width="1.6" stroke-linecap="round"/><path d="M14.3 21.1 L16.2 19.3 H25 C26 19.3 26.7 20.1 26.7 21.1 C26.7 22.1 26 23 25 23 H16.2 Z" fill="#ababab"/></svg>
<svg class="abs" style="left:1369px;top:827px" width="10" height="9" viewBox="0 0 10 9"><path d="M1.1 5.9 L4.3 2.5 L7.6 6.1" fill="none" stroke="#bdbdbd" stroke-width="1.45"/></svg>
<div class="tl" style="left:1175px;width:300px;text-align:center;color:#c6c6c6">Доски сообщений</div>
<div class="abs" style="left:1489.5px;top:826.8px;width:98px;height:28px;border-radius:7px;background:#b72426"></div>
<div class="abs" style="left:1489.5px;top:833.5px;width:98px;text-align:center;color:#fff;font-weight:bold;font-size:12.2px;line-height:15px">Завершение</div>

<div id="task"></div>
<div class="abs" style="left:0;top:866px;width:1600px;height:1px;background:#202020"></div><div class="abs" style="left:0;top:867px;width:1600px;height:1px;background:#000"></div>
<svg class="abs" style="left:10px;top:875px" width="18" height="19" viewBox="0 0 18 19"><path d="M0.2 2.8 L6.8 1.9 V8.6 H0.2 Z M7.9 1.7 L16.9 0.5 V8.6 H7.9 Z M0.2 9.6 H6.8 V16.2 L0.2 15.3 Z M7.9 9.6 H16.9 V17.7 L7.9 16.4 Z" fill="#000"/></svg>
<svg class="abs" style="left:46px;top:874px" width="20" height="20" viewBox="0 0 20 20"><circle cx="12.1" cy="7.5" r="5.4" fill="none" stroke="#1a1a1a" stroke-width="1.1"/><path d="M1.5 18.5 L8.2 11.6" stroke="#1a1a1a" stroke-width="1.1"/></svg>
<svg class="abs" style="left:84px;top:875px" width="20" height="18" viewBox="0 0 20 18"><path d="M1.5 1 V3.5 H11.5 V1 M1.5 13 V17 M11.5 13 V17" fill="none" stroke="#111" stroke-width="1"/><path d="M1.5 12 V5.5 H11.5 V12" fill="none" stroke="#111" stroke-width="1"/><rect x="1" y="11.4" width="11" height="2.5" fill="#56656c"/><path d="M16.5 1 V6.5 M16.5 9 V17" stroke="#111" stroke-width="1"/><rect x="15.4" y="6" width="2.3" height="2.2" fill="#000"/></svg>
<svg class="abs" style="left:126px;top:876px" width="16" height="15" viewBox="0 0 16 15"><path d="M0.3 1.2 C0.3 0.6 0.7 0.3 1.2 0.3 H5.2 L6.6 1.8 H6.6 V3 H0.3 Z" fill="#e0a020"/><rect x="0.3" y="2.4" width="15.3" height="11.8" rx="0.8" fill="#fbd56a"/><path d="M4.4 14.4 V9.3 H11.4 V14.4 H9.6 V11.1 H6.2 V14.4 Z" fill="#3b8fe0"/></svg>
<div class="abs" style="left:120px;top:897.4px;width:29px;height:2.6px;background:#4c9bf7"></div>
<svg class="abs" style="left:164px;top:876px" width="17" height="17" viewBox="0 0 17 17"><path d="M4.6 2.6 C4.6 0.8 5.6 0.3 8.4 0.3 C11.2 0.3 12.2 0.8 12.2 2.6" fill="none" stroke="#5cc3f3" stroke-width="1.3"/><rect x="0.3" y="2.5" width="15.8" height="13.9" rx="1.8" fill="#1c4f8f"/><rect x="4" y="5.6" width="3.8" height="3.8" fill="#f25022"/><rect x="8.6" y="5.6" width="3.8" height="3.8" fill="#7fba00"/><rect x="4" y="10.2" width="3.8" height="3.8" fill="#00a4ef"/><rect x="8.6" y="10.2" width="3.8" height="3.8" fill="#ffb900"/></svg>
<svg class="abs" style="left:202px;top:876px" width="17" height="16" viewBox="0 0 17 16"><path d="M0.3 6 L8.4 0.3 L16.7 6 V15.8 H0.3 Z" fill="#1469c4"/><path d="M2.4 4.4 H14.6 L8.5 9 Z" fill="#f0f0f0"/><path d="M0.3 6.3 L8.5 11.8 L16.7 6.3 V15.8 H0.3 Z" fill="#33a4ea"/><path d="M0.3 15.8 L8.5 10.2 L16.7 15.8 Z" fill="#52bdf5"/></svg>
<svg class="abs" style="left:240px;top:876px" width="18" height="17" viewBox="0 0 18 17"><defs><linearGradient id="eg" x1="0" y1="0" x2="1" y2="0.3"><stop offset="0" stop-color="#1e9cf0"/><stop offset="0.5" stop-color="#2fc2c4"/><stop offset="1" stop-color="#52e04a"/></linearGradient><linearGradient id="ew" x1="0" y1="0" x2="1" y2="1"><stop offset="0" stop-color="#1a86e0"/><stop offset="0.6" stop-color="#0d5cb8"/><stop offset="1" stop-color="#0a3f8c"/></linearGradient></defs><path d="M0.8 8.5 C0.8 3.6 4.6 -0.2 9.4 -0.2 C14.4 -0.2 17.9 3.2 17.9 7.4 C17.9 10 16.2 11.4 13.6 11.4 C11 11.4 9.6 10.4 9.6 9 Z" fill="url(#eg)"/><path d="M0.8 8.5 C0.8 5.5 3.2 4 5.8 4 C8.2 4 10.2 5.6 10.4 7.4 C9 7.6 8.4 8.8 8.8 10 C9.6 12 12.4 12.4 16.8 11.8 C15.6 14.8 12.6 16.8 9 16.8 C4.4 16.8 0.8 13.2 0.8 8.5 Z" fill="url(#ew)"/><circle cx="10" cy="8.9" r="1.6" fill="#e0ecf2"/></svg>
<svg class="abs" style="left:279px;top:875px" width="17" height="18" viewBox="0 0 17 18"><defs><linearGradient id="np" x1="0" y1="0" x2="0" y2="1"><stop offset="0" stop-color="#fbfbfb"/><stop offset="0.33" stop-color="#f4f8ee"/><stop offset="0.55" stop-color="#b9ec55"/><stop offset="0.8" stop-color="#5fc23c"/><stop offset="1" stop-color="#219a22"/></linearGradient></defs><path d="M0.8 1.2 H10.4 L13 3.6 V17.2 H0.8 Z" fill="url(#np)" stroke="#b0b4b8" stroke-width="0.7"/><path d="M10.4 1.2 V3.6 H13" fill="#d8dadc" stroke="#b0b4b8" stroke-width="0.5"/><rect x="3" y="5" width="2.6" height="6" rx="1.2" fill="#6a6e70"/><circle cx="7.5" cy="8.2" r="0.7" fill="#555"/><circle cx="9.5" cy="8.2" r="0.7" fill="#555"/><path d="M9.8 13.8 L15.2 2.4" stroke="#e4a01a" stroke-width="1.6"/><circle cx="15.4" cy="1.8" r="0.9" fill="#c8283a"/></svg>
<svg class="abs" style="left:317px;top:875px" width="18" height="18" viewBox="0 0 18 18"><rect x="9.6" y="2.6" width="6.8" height="13" rx="1" fill="#fff" stroke="#2b5aa0" stroke-width="1"/><path d="M10.6 5.6 H15 M10.6 7.6 H15 M10.6 9.6 H15 M10.6 11.6 H15" stroke="#5a82c0" stroke-width="0.9"/><path d="M0.4 3 L10.4 1 V17 L0.4 15.6 Z" fill="#2b5aa0"/><path d="M2 6.2 L3.4 12.4 L5.2 7.6 L7 12.4 L8.4 6.2" fill="none" stroke="#fff" stroke-width="1.3"/></svg>
<svg class="abs" style="left:355px;top:875px" width="18" height="18" viewBox="0 0 18 18"><defs><radialGradient id="ff" cx="0.6" cy="0.2" r="0.9"><stop offset="0" stop-color="#ffe14a"/><stop offset="0.45" stop-color="#ff8a1a"/><stop offset="1" stop-color="#f02d5e"/></radialGradient></defs><circle cx="8.8" cy="10" r="7.6" fill="url(#ff)"/><path d="M10 0.6 C13 2.5 16 5 16.5 9 L13 6 Z" fill="#ffc83a"/><circle cx="9.5" cy="9.5" r="3.6" fill="#7542e5"/><path d="M6.4 7.2 C7.5 5.8 10.6 5.5 12 7.4 C10.5 6.8 8.6 7 7.6 8.2 Z" fill="#ff7139"/></svg>
<div class="abs" style="left:350px;top:897.4px;width:29px;height:2.6px;background:#4c9bf7"></div>
<div class="abs" style="left:384px;top:868px;width:37.6px;height:32px;background:#f3b27d"></div>
<div class="abs" style="left:384px;top:897.5px;width:37.6px;height:2.5px;background:#ff6d0c"></div>
<svg class="abs" style="left:394px;top:876px" width="17" height="17" viewBox="0 0 17 17"><path d="M8.4 0.6 C3.7 0.6 1 2.9 1 7.6 C1 11 2.3 12.8 4.5 13.6 V16.4 L7 14.3 C7.4 14.4 7.9 14.4 8.4 14.4 C13.2 14.4 15.8 12.3 15.8 7.6 C15.8 2.9 13.2 0.6 8.4 0.6 Z" fill="#7360f2" stroke="#fff" stroke-width="1"/><path d="M5.5 4.2 C6.2 3.9 6.6 4.3 7 5 C7.4 5.8 7.2 6.2 6.8 6.6 C7.3 7.8 8.1 8.8 9.4 9.4 C9.8 9 10.3 8.8 11 9.3 C11.8 9.8 12 10.2 11.6 10.8 C11.1 11.6 10.3 11.7 9.5 11.3 C7.3 10.2 5.4 8.3 4.7 6 C4.4 5.2 4.8 4.5 5.5 4.2 Z" fill="#fff"/></svg>
<div class="abs" style="left:421.6px;top:868px;width:35px;height:32px;background:#e5eff5"></div>
<div class="abs" style="left:421.6px;top:897.5px;width:35px;height:2.5px;background:#4c9bf7"></div>
<div class="abs" style="left:456.5px;top:897.5px;width:2.5px;height:2.5px;background:#9cc8f5"></div>
<div class="abs" style="left:456.6px;top:869px;width:1px;height:31px;background:#c5d3da"></div>
<svg class="abs" style="left:432px;top:875.5px" width="18" height="18" viewBox="0 0 18 18"><circle cx="8.8" cy="8.7" r="8.3" fill="#1b5fff"/><text x="8.8" y="10.4" text-anchor="middle" font-family="Liberation Sans" font-size="5" letter-spacing="-0.2" fill="#e8f0ff">zoom</text></svg>
<svg class="abs" style="left:470px;top:875px" width="19" height="18" viewBox="0 0 19 18"><rect x="9" y="2.2" width="9.2" height="13.4" rx="0.8" fill="#fff" stroke="#1f7244" stroke-width="1"/><path d="M11 5 H17 M11 7.6 H17 M11 10.2 H17 M11 12.8 H17 M13.6 3 V15" stroke="#1f7244" stroke-width="0.8"/><path d="M0.6 2.3 L10.6 0.3 V17.7 L0.6 15.8 Z" fill="#1f7244"/><text x="5.6" y="12.2" text-anchor="middle" font-family="Liberation Sans" font-weight="bold" font-size="8.5" fill="#fff">X</text></svg>
<div class="abs" style="left:465px;top:897.5px;width:21.2px;height:2.5px;background:#4c9bf7"></div>
<div class="abs" style="left:486.2px;top:897.5px;width:8px;height:2.5px;background:#9cc8f5"></div>
<svg class="abs" style="left:1239px;top:873px" width="22" height="22" viewBox="0 0 22 22"><defs><linearGradient id="sun" x1="0" y1="0" x2="1" y2="1"><stop offset="0" stop-color="#f7c21d"/><stop offset="1" stop-color="#f2580c"/></linearGradient></defs><circle cx="11" cy="11" r="10.3" fill="url(#sun)"/></svg>
<div class="abs" style="left:1272px;top:876px;color:#1a1a1a;font-size:14px;line-height:16px;white-space:nowrap">13°C&nbsp; Sunny</div>
<svg class="abs" style="left:1370px;top:878px" width="16" height="12" viewBox="0 0 16 12"><path d="M1 9.6 L7.5 3 L14 9.6" fill="none" stroke="#1a1a1a" stroke-width="1.1"/></svg>
<svg class="abs" style="left:1395px;top:875px" width="15" height="19" viewBox="0 0 15 19"><rect x="3.4" y="0.9" width="7.5" height="13.5" rx="2" fill="#000"/><path d="M1.5 9.5 V11.5 C1.5 13.6 3.5 15 7.1 15 C10.7 15 12.7 13.6 12.7 11.5 V9.5" fill="none" stroke="#555" stroke-width="1.2"/><path d="M7.1 15 V17.2 M4.7 17.6 H9.5" stroke="#333" stroke-width="1"/></svg>
<svg class="abs" style="left:1420px;top:877px" width="15" height="15" viewBox="0 0 15 15"><path d="M1 13 C1 6.5 6.5 1 13 1" fill="none" stroke="#1a1a1a" stroke-width="1"/><path d="M4.6 13 C4.6 8.6 8.6 4.6 13 4.6" fill="none" stroke="#1a1a1a" stroke-width="1"/><path d="M8.2 13 C8.2 10.5 10.5 8.2 13 8.2" fill="none" stroke="#1a1a1a" stroke-width="1"/><circle cx="12.6" cy="12.6" r="1.2" fill="#000"/></svg>
<svg class="abs" style="left:1443px;top:877px" width="18" height="14" viewBox="0 0 18 14"><path d="M1.3 4.3 H3.8 L6.8 1.2 V12.6 L3.8 9.6 H1.3 Z" fill="none" stroke="#1a1a1a" stroke-width="1"/><path d="M10 4.2 L15.8 10 M15.8 4.2 L10 10" stroke="#1a1a1a" stroke-width="1"/></svg>
<div class="abs" style="left:1472.5px;top:877.5px;color:#1a1a1a;font-size:12px;line-height:14px;white-space:nowrap">УКР</div>
<div class="abs" style="left:1510px;top:877.5px;color:#1a1a1a;font-size:12px;line-height:14px;white-space:nowrap">16:32</div>
<svg class="abs" style="left:1556px;top:875px" width="20" height="19" viewBox="0 0 20 19"><path d="M1.8 1.3 H17.9 V14.7 H11.6 L9.8 16.6 L8 14.7 H1.8 Z" fill="none" stroke="#1a1a1a" stroke-width="1.1"/></svg>
<div class="abs" style="left:1595px;top:869px;width:1px;height:31px;background:#9aa3a8"></div>
<div class="abs" style="left:0;top:868px;width:1600px;height:1px;background:rgba(0,0,0,0.36)"></div><div class="abs" style="left:0;top:869px;width:1600px;height:1px;background:rgba(255,255,255,0.45)"></div>
</body></html>
